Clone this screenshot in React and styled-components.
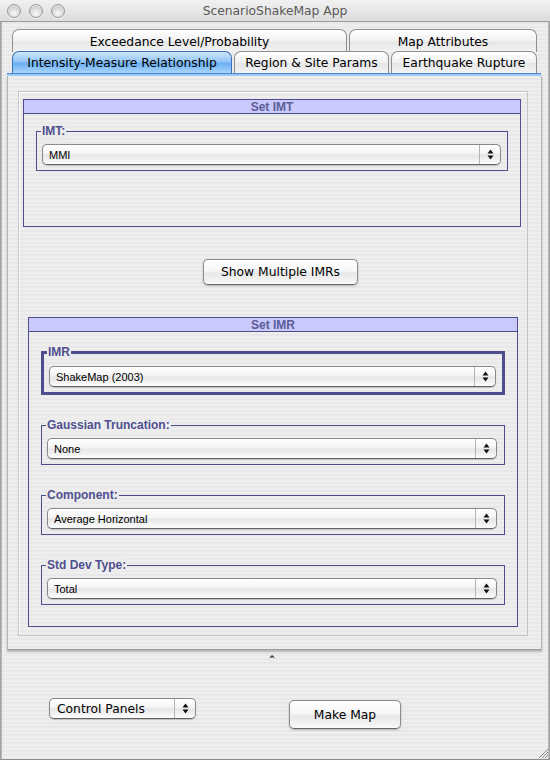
import React from "react";
import styled, { createGlobalStyle } from "styled-components";

const GlobalStyle = createGlobalStyle`
  html, body { margin: 0; padding: 0; background: #ececec; }
  * { box-sizing: border-box; }
`;

const pinstripe = `repeating-linear-gradient(to bottom, #eeeeee 0px, #eeeeee 2px, #e8e8e8 2px, #e8e8e8 4px)`;

const Window = styled.div`
  width: 550px;
  height: 760px;
  display: flex;
  flex-direction: column;
  position: relative;
  font-family: "DejaVu Sans", "Liberation Sans", sans-serif;
  background: ${pinstripe};
`;

const TitleBar = styled.div`
  height: 22px;
  display: grid;
  grid-template-columns: 1fr auto 1fr;
  align-items: center;
  background: linear-gradient(to bottom, #f1f1f1, #dcdcdc);
  border-bottom: 1px solid #9c9c9c;
`;

const Lights = styled.div`
  display: flex;
  gap: 8px;
  padding-left: 7px;
`;

const Light = styled.span`
  width: 14px;
  height: 14px;
  border-radius: 50%;
  border: 1px solid #969696;
  background: radial-gradient(circle at 50% 72%, #fafafa 0%, #dddddd 45%, #b3b3b3 100%);
  box-shadow: inset 0 1px 1px rgba(255,255,255,0.8), 0 1px 0 rgba(255,255,255,0.6);
`;

const Title = styled.div`
  font-size: 12.3px;
  color: #5a5a5a;
  padding-top: 1px;
`;

const Body = styled.div`
  flex: 1;
  display: flex;
  flex-direction: column;
  padding: 7px 7px 0 6px;
  border-left: 1px solid #a4a4a4;
  border-right: 1px solid #a4a4a4;
  border-bottom: 1px solid #8c8c8c;
  box-shadow: inset 3px 0 0 -2px #b6b6b6, inset -3px 0 0 -2px #b6b6b6;
`;

const Tabs = styled.div`
  margin: 0 4px 0 5px;
  display: flex;
  flex-direction: column;
`;

const TabRow = styled.div`
  display: flex;
  gap: 2px;
  margin-top: ${(p) => (p.$front ? "-1px" : "0")};
  position: relative;
  z-index: ${(p) => (p.$front ? 2 : 1)};
`;

const Tab = styled.div`
  width: ${(p) => p.$w}px;
  height: ${(p) => p.$h}px;
  display: flex;
  align-items: center;
  justify-content: center;
  font-size: 12.3px;
  color: #000;
  border: 1px solid ${(p) => (p.$active ? "#3d6fb8" : "#8f8f8f")};
  border-bottom: none;
  border-radius: 7px 7px 0 0;
  background: ${(p) =>
    p.$active
      ? "linear-gradient(to bottom, #cfe6fc 0%, #93c5f6 45%, #6bb0f2 55%, #a9d5fb 100%)"
      : "linear-gradient(to bottom, #ffffff 0%, #f1f1f1 50%, #e6e6e6 55%, #f3f3f3 100%)"};
  box-shadow: ${(p) => (p.$active ? "none" : "inset 0 1px 0 #ffffff")};
  padding-top: 1px;
`;

const BlueStrip = styled.div`
  height: 3px;
  margin-right: 1px;
  background: #9ccaf6;
  border-top: 1px solid #4a85d2;
`;

const Panel = styled.div`
  height: 574px;
  padding: 15px 13px 13px 10px;
  border-left: 1px solid #b5b5b5;
  border-right: 1px solid #b5b5b5;
  border-bottom: 1px solid #9a9a9a;
  box-shadow: 0 2px 2px rgba(0, 0, 0, 0.22);
  display: flex;
  flex-direction: column;
`;

const InnerBox = styled.div`
  flex: 1;
  border: 1px solid #c6c6c6;
  box-shadow: inset 1px 1px 0 #fafafa;
  padding: 7px 0 0 0;
  display: flex;
  flex-direction: column;
`;

const Section = styled.div`
  border: 1px solid #4e4e8e;
  margin: ${(p) => p.$margin};
  height: ${(p) => (p.$h ? `${p.$h}px` : "auto")};
  display: flex;
  flex-direction: column;
  padding-bottom: ${(p) => p.$pb || 0}px;
`;

const SectionHeader = styled.div`
  height: 14px;
  background: #c9c9fb;
  border-bottom: 1px solid #4e4e8e;
  display: flex;
  align-items: center;
  justify-content: center;
  font-family: "Liberation Sans", Arial, sans-serif;
  font-weight: bold;
  font-size: 12px;
  color: #5c5c9a;
`;

const Group = styled.div`
  position: relative;
  border: ${(p) => (p.$thick ? "3px" : "1px")} solid #4e4e8e;
  margin: ${(p) => p.$margin};
  padding: 12px ${(p) => p.$pr || 6}px ${(p) => p.$pbot || 5}px 5px;
`;

const GroupLabel = styled.span`
  position: absolute;
  top: ${(p) => (p.$thick ? "-9px" : "-8px")};
  left: ${(p) => (p.$thick ? "3px" : "4px")};
  padding: 0 1px;
  background: #ececec;
  font-family: "Liberation Sans", Arial, sans-serif;
  font-weight: bold;
  font-size: 12px;
  line-height: 14px;
  color: #50508f;
`;

const Combo = styled.div`
  height: 21px;
  width: ${(p) => (p.$w ? `${p.$w}px` : "auto")};
  display: flex;
  border: 1px solid #8a8a8a;
  border-bottom-color: #606060;
  border-radius: 5px;
  background: linear-gradient(to bottom, #ffffff 0%, #f6f6f6 40%, #e7e7e7 55%, #f5f5f5 85%, #fdfdfd 100%);
  box-shadow: 0 1px 1px rgba(0, 0, 0, 0.18);
  font-family: ${(p) => (p.$big ? '"DejaVu Sans", sans-serif' : '"Liberation Sans", Arial, sans-serif')};
  font-size: ${(p) => (p.$big ? "12.3px" : "11px")};
  color: #000;
`;

const ComboText = styled.div`
  flex: 1;
  display: flex;
  align-items: center;
  padding-left: ${(p) => (p.$big ? 7 : 6)}px;
  white-space: nowrap;
`;

const ComboArrows = styled.div`
  width: 21px;
  border-left: 1px solid #b4b4b4;
  display: flex;
  align-items: center;
  justify-content: center;
`;

const ButtonRow = styled.div`
  display: flex;
  justify-content: center;
  padding-left: 15px;
  margin: ${(p) => p.$margin};
`;

const Button = styled.div`
  width: ${(p) => p.$w}px;
  height: ${(p) => p.$h}px;
  display: flex;
  align-items: center;
  justify-content: center;
  border: 1px solid #8b8b8b;
  border-bottom-color: #666;
  border-radius: 5px;
  background: linear-gradient(to bottom, #ffffff 0%, #f7f7f7 45%, #e8e8e8 55%, #f4f4f4 90%, #fcfcfc 100%);
  box-shadow: 0 1px 2px rgba(0, 0, 0, 0.25);
  font-size: 12.3px;
  color: #000;
  margin-left: ${(p) => p.$ml || 0}px;
  margin-top: ${(p) => p.$mt || 0}px;
`;

const CaretRow = styled.div`
  display: flex;
  justify-content: center;
  padding-right: 5px;
  margin-top: 5px;
  height: 10px;
  color: #222;
  font-size: 13px;
  line-height: 14px;
  font-weight: bold;
`;

const BottomRow = styled.div`
  display: flex;
  align-items: flex-start;
  padding-left: 42px;
  margin-top: 33px;
`;

const Grip = styled.svg`
  position: absolute;
  right: 1px;
  bottom: 1px;
`;

const Arrows = () => (
  <svg width="7" height="11" viewBox="0 0 7 11">
    <polygon points="0.5,4.5 3.5,0.5 6.5,4.5" fill="#111" />
    <polygon points="0.5,6.5 6.5,6.5 3.5,10.5" fill="#111" />
  </svg>
);

const Select = ({ value, big, w }) => (
  <Combo $big={big} $w={w}>
    <ComboText $big={big}>{value}</ComboText>
    <ComboArrows>
      <Arrows />
    </ComboArrows>
  </Combo>
);

export default function App() {
  return (
    <>
      <GlobalStyle />
      <Window>
        <TitleBar>
          <Lights>
            <Light />
            <Light />
            <Light />
          </Lights>
          <Title>ScenarioShakeMap App</Title>
          <div />
        </TitleBar>
        <Body>
          <Tabs>
            <TabRow>
              <Tab $w={335} $h={23}>Exceedance Level/Probability</Tab>
              <Tab $w={188} $h={23}>Map Attributes</Tab>
            </TabRow>
            <TabRow $front>
              <Tab $w={220} $h={22} $active>Intensity-Measure Relationship</Tab>
              <Tab $w={155} $h={22}>Region &amp; Site Params</Tab>
              <Tab $w={146} $h={22}>Earthquake Rupture</Tab>
            </TabRow>
          </Tabs>
          <BlueStrip />
          <Panel>
            <InnerBox>
              <Section $margin="0 6px 0 4px" $h={128}>
                <SectionHeader>Set IMT</SectionHeader>
                <Group $margin="17px 12px 0 12px">
                  <GroupLabel>IMT:</GroupLabel>
                  <Select value="MMI" />
                </Group>
              </Section>
              <ButtonRow $margin="32px 0 32px 0">
                <Button $w={155} $h={26}>Show Multiple IMRs</Button>
              </ButtonRow>
              <Section $margin="0 9px 0 9px" $pb={21}>
                <SectionHeader>Set IMR</SectionHeader>
                <Group $thick $margin="19px 12px 0 12px" $pr={6}>
                  <GroupLabel $thick>IMR</GroupLabel>
                  <Select value="ShakeMap (2003)" />
                </Group>
                <Group $margin="30px 12px 0 12px" $pr={7} $pbot={5}>
                  <GroupLabel>Gaussian Truncation:</GroupLabel>
                  <Select value="None" />
                </Group>
                <Group $margin="30px 12px 0 12px" $pr={7} $pbot={5}>
                  <GroupLabel>Component:</GroupLabel>
                  <Select value="Average Horizontal" />
                </Group>
                <Group $margin="30px 12px 0 12px" $pr={7} $pbot={5}>
                  <GroupLabel>Std Dev Type:</GroupLabel>
                  <Select value="Total" />
                </Group>
              </Section>
            </InnerBox>
          </Panel>
          <CaretRow>ˆ</CaretRow>
          <BottomRow>
            <Select value="Control Panels" big w={147} />
            <Button $w={112} $h={29} $ml={93} $mt={2}>Make Map</Button>
          </BottomRow>
        </Body>
        <Grip width="12" height="12" viewBox="0 0 12 12">
          <line x1="11" y1="2" x2="2" y2="11" stroke="#8a8a8a" strokeWidth="1" />
          <line x1="11" y1="5" x2="5" y2="11" stroke="#8a8a8a" strokeWidth="1" />
          <line x1="11" y1="8" x2="8" y2="11" stroke="#8a8a8a" strokeWidth="1" />
        </Grip>
      </Window>
    </>
  );
}
